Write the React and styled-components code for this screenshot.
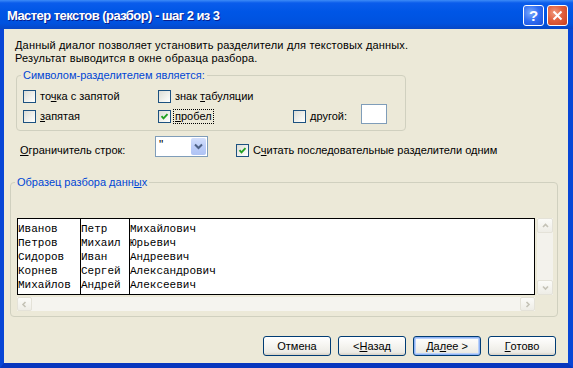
import React from 'react'
import styled, { createGlobalStyle } from 'styled-components'

const GlobalStyle = createGlobalStyle`
html, body {
  margin: 0;
  padding: 0;
  background: #ECE9D8;
}
body {
  font-family: "Liberation Sans", Arial, sans-serif;
  font-size: 11px;
  color: #000;
}
`

const Window = styled.div`
width: 573px;
height: 368px;
display: flex;
flex-direction: column;
overflow: hidden;
`
const TitleBar = styled.div`
height: 29px;
flex: none;
display: flex;
align-items: center;
padding-left: 7px;
background: linear-gradient(to bottom, #3D8BF7 0px, #0A5CEB 3px, #0056E6 40%, #0052DF 80%, #0747C6 100%);
`
const Title = styled.div`
color: #fff;
font-weight: bold;
font-size: 13px;
letter-spacing: -0.55px;
text-shadow: 1px 1px 0 #0A1E8C;
margin-top: 1px;
`
const TitleButtons = styled.div`
margin-left: auto;
display: flex;
gap: 3px;
padding-right: 5px;
margin-top: 1px;
`
const CaptionButton = styled.div`
width: 21px;
height: 21px;
box-sizing: border-box;
border: 1px solid #fff;
border-radius: 3px;
display: flex;
align-items: center;
justify-content: center;
color: #fff;
font-weight: bold;
font-size: 15px;
background: ${p => p.$close
  ? 'radial-gradient(circle at 35% 35%, #F09A7E 0%, #E2613E 45%, #C9401E 100%)'
  : 'radial-gradient(circle at 35% 35%, #7CAAFB 0%, #2F6CF2 50%, #1B4FD8 100%)'};
`
const Frame = styled.div`
flex: 1;
display: flex;
border-left: 4px solid #0846D6;
border-right: 5px solid #0846D6;
border-bottom: 5px solid #0736BE;
box-shadow: inset 1px 0 0 #2E6AE8;
`
const Body = styled.div`
flex: 1;
background: #ECE9D8;
display: flex;
flex-direction: column;
`
const Description = styled.div`
margin: 10px 0 0 11px;
line-height: 13px;
letter-spacing: 0.17px;
`
const Group = styled.fieldset`
margin: ${p => p.$top}px 0 0 ${p => p.$left}px;
width: ${p => p.$width}px;
box-sizing: border-box;
border: 1px solid #D0D0BF;
border-radius: 4px;
padding: ${p => p.$pad};
min-width: 0;
`
const Legend = styled.legend`
color: #0046D5;
line-height: 13px;
padding: 0 2px;
margin-left: -2px;
`
const OptionGrid = styled.div`
display: grid;
grid-template-columns: 135px 135px 135px;
grid-auto-rows: 20px;
`
const Option = styled.label`
display: flex;
align-items: center;
gap: 4px;
margin-top: ${p => p.$mt || 0}px;
`
const Box = styled.span`
width: 13px;
height: 13px;
flex: none;
box-sizing: border-box;
border: 1px solid #1C5180;
background: linear-gradient(135deg, #DCDCD5 0%, #F2F2EE 60%, #FFFFFF 100%);
display: flex;
align-items: center;
justify-content: center;
`
const LabelText = styled.span`
line-height: 13px;
border: 1px dotted ${p => p.$focus ? '#000' : 'transparent'};
padding: 0 1px;
margin-left: -2px;
`
const SmallInput = styled.div`
width: 26px;
height: 20px;
box-sizing: border-box;
border: 1px solid #7F9DB9;
background: #fff;
margin-left: 8px;
margin-top: -4px;
`
const ControlsRow = styled.div`
display: flex;
align-items: flex-start;
margin: 5px 0 0 16px;
height: 21px;
`
const RowLabel = styled.div`
width: 135px;
margin-top: 8px;
line-height: 13px;
`
const Combo = styled.div`
width: 53px;
height: 21px;
box-sizing: border-box;
border: 1px solid #7F9DB9;
background: #fff;
display: flex;
margin-right: 28px;
`
const ComboValue = styled.div`
flex: 1;
padding: 2px 0 0 3px;
font-size: 12px;
line-height: 13px;
`
const ComboButton = styled.div`
width: 15px;
margin: 1px;
border-radius: 2px;
background: linear-gradient(to bottom, #D4E0FC 0%, #BCCDF8 50%, #AFC3F4 100%);
display: flex;
align-items: center;
justify-content: center;
`
const Preview = styled.div`
display: grid;
grid-template-columns: 518px 16px;
grid-template-rows: 77px 14px;
column-gap: 2px;
row-gap: 2px;
`
const DataBox = styled.div`
display: flex;
box-sizing: border-box;
border: 1px solid #000;
background: #fff;
font-family: "Liberation Mono", "Courier New", monospace;
font-size: 11px;
`
const Column = styled.div`
box-sizing: border-box;
width: ${p => p.$width ? p.$width + 'px' : 'auto'};
flex: ${p => p.$width ? 'none' : '1'};
border-right: ${p => p.$width ? '1px solid #000' : 'none'};
padding-top: 3px;
`
const Cell = styled.div`
line-height: 14px;
white-space: pre;
`
const VScroll = styled.div`
display: flex;
flex-direction: column;
justify-content: space-between;
background: #F3F2EC;
`
const HScroll = styled.div`
display: flex;
justify-content: space-between;
background: #F5F4EF;
`
const ScrollArrow = styled.div`
width: ${p => p.$w}px;
height: ${p => p.$h}px;
box-sizing: border-box;
border: 1px solid #E4E2D8;
border-radius: 2px;
background: linear-gradient(to bottom, #FBFBF8, #EEEDE6);
display: flex;
align-items: center;
justify-content: center;
`
const ButtonRow = styled.div`
display: flex;
justify-content: flex-end;
gap: 7px;
margin: 19px 12px 0 0;
`
const Button = styled.div`
width: 68px;
height: 20px;
box-sizing: border-box;
border: 1px solid #003C74;
border-radius: 3px;
background: linear-gradient(to bottom, #FFFFFF 0%, #F6F5F1 45%, #ECEBE5 85%, #D6D0C5 100%);
box-shadow: ${p => p.$default ? 'inset 0 0 0 1px #8FB2F5, inset 0 0 0 2px #B9D1FA' : 'none'};
display: flex;
align-items: center;
justify-content: center;
line-height: 13px;
`

const Check = ({ checked }) => (
  <Box>
    {checked && (
      <svg width="9" height="9" viewBox="0 0 9 9">
        <polyline points="1.5,4.2 3.5,6.3 7.5,2.2" fill="none" stroke="#21A121" strokeWidth="1.9" />
      </svg>
    )}
  </Box>
)

const Chevron = ({ dir, color = '#C4C2B6', size = 7 }) => {
  const pts = {
    up: '1,5 3.5,2.5 6,5',
    down: '1,2.5 3.5,5 6,2.5',
    left: '4.5,1 2,3.5 4.5,6',
    right: '2.5,1 5,3.5 2.5,6',
  }[dir]
  return (
    <svg width={size} height={size} viewBox="0 0 7 7">
      <polyline points={pts} fill="none" stroke={color} strokeWidth="1.6" />
    </svg>
  )
}

const rows = [
  ['Иванов', 'Петр', 'Михайлович'],
  ['Петров', 'Михаил', 'Юрьевич'],
  ['Сидоров', 'Иван', 'Андреевич'],
  ['Корнев', 'Сергей', 'Александрович'],
  ['Михайлов', 'Андрей', 'Алексеевич'],
]
const widths = [63, 49, null]

const App = () => {
  return (
    <Window>
      <GlobalStyle />
      <TitleBar>
        <Title>Мастер текстов (разбор) - шаг 2 из 3</Title>
        <TitleButtons>
          <CaptionButton>?</CaptionButton>
          <CaptionButton $close>
            <svg width="11" height="11" viewBox="0 0 11 11">
              <path d="M1.5 1.5 L9.5 9.5 M9.5 1.5 L1.5 9.5" stroke="#fff" strokeWidth="2" />
            </svg>
          </CaptionButton>
        </TitleButtons>
      </TitleBar>
      <Frame>
        <Body>
          <Description>
            Данный диалог позволяет установить разделители для текстовых данных.<br />
            Результат выводится в окне образца разбора.
          </Description>

          <Group $top={4} $left={12} $width={390} $pad="4px 6px 4px 6px">
            <Legend>Символом-разделителем является:</Legend>
            <OptionGrid>
              <Option><Check /><LabelText>то<u>ч</u>ка с запятой</LabelText></Option>
              <Option><Check /><LabelText>знак <u>т</u>абуляции</LabelText></Option>
              <div />
              <Option><Check /><LabelText><u>з</u>апятая</LabelText></Option>
              <Option><Check checked /><LabelText $focus><u>п</u>робел</LabelText></Option>
              <Option><Check /><LabelText><u>д</u>ругой:</LabelText><SmallInput /></Option>
            </OptionGrid>
          </Group>

          <ControlsRow>
            <RowLabel><u>О</u>граничитель строк:</RowLabel>
            <Combo>
              <ComboValue>"</ComboValue>
              <ComboButton>
                <svg width="9" height="7" viewBox="0 0 9 7">
                  <polyline points="1,1.5 4.5,5 8,1.5" fill="none" stroke="#4D6185" strokeWidth="2" />
                </svg>
              </ComboButton>
            </Combo>
            <Option $mt={7}><Check checked /><LabelText>С<u>ч</u>итать последовательные разделители одним</LabelText></Option>
          </ControlsRow>

          <Group $top={19} $left={6} $width={548} $pad="29px 6px 5px 6px">
            <Legend>Образец разбора данн<u>ы</u>х</Legend>
            <Preview>
              <DataBox>
                {widths.map((w, ci) => (
                  <Column key={ci} $width={w}>
                    {rows.map((r, ri) => <Cell key={ri}>{r[ci]}</Cell>)}
                  </Column>
                ))}
              </DataBox>
              <VScroll>
                <ScrollArrow $w={16} $h={15}><Chevron dir="up" /></ScrollArrow>
                <ScrollArrow $w={16} $h={15}><Chevron dir="down" /></ScrollArrow>
              </VScroll>
              <HScroll>
                <ScrollArrow $w={15} $h={14}><Chevron dir="left" /></ScrollArrow>
                <ScrollArrow $w={15} $h={14}><Chevron dir="right" /></ScrollArrow>
              </HScroll>
            </Preview>
          </Group>

          <ButtonRow>
            <Button>Отмена</Button>
            <Button>&lt; <u>Н</u>азад</Button>
            <Button $default>Да<u>л</u>ее &gt;</Button>
            <Button><u>Г</u>отово</Button>
          </ButtonRow>
        </Body>
      </Frame>
    </Window>
  )
}

export default App
